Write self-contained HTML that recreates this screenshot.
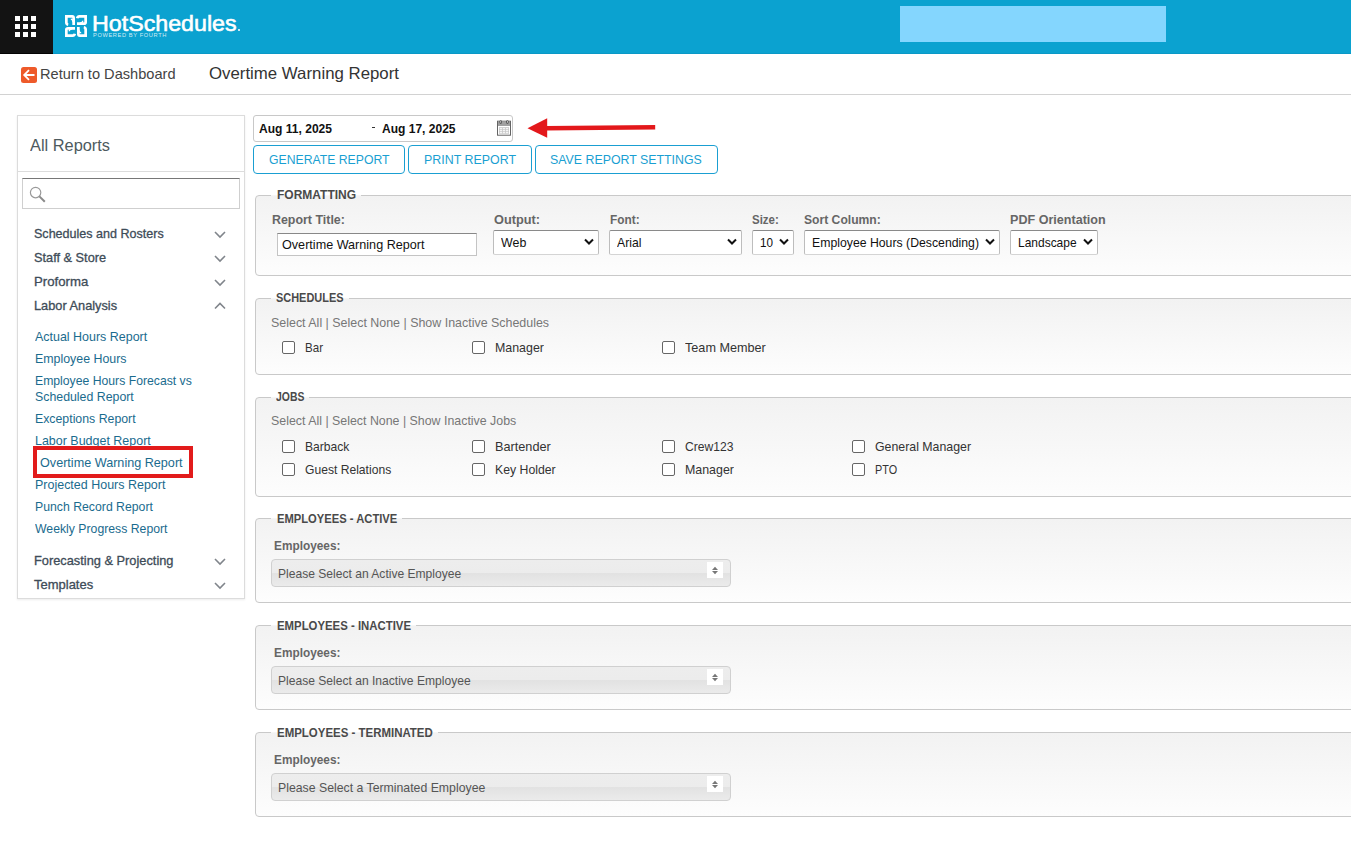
<!DOCTYPE html>
<html><head><meta charset="utf-8"><title>Overtime Warning Report</title>
<style>
html,body{margin:0;padding:0;width:1351px;height:867px;overflow:hidden;background:#fff;position:relative;font-family:"Liberation Sans",sans-serif;}
.t{position:absolute;white-space:nowrap;transform-origin:0 50%;}
.r{position:absolute;box-sizing:content-box;}
svg.r{display:block}
</style></head><body>
<div class="r" style="left:0px;top:0px;width:53px;height:54px;background:#131313"></div>
<div class="r" style="left:14.9px;top:15.9px;width:5.3px;height:5.4px;background:#fff"></div>
<div class="r" style="left:22.95px;top:15.9px;width:5.3px;height:5.4px;background:#fff"></div>
<div class="r" style="left:31.0px;top:15.9px;width:5.3px;height:5.4px;background:#fff"></div>
<div class="r" style="left:14.9px;top:23.85px;width:5.3px;height:5.4px;background:#fff"></div>
<div class="r" style="left:22.95px;top:23.85px;width:5.3px;height:5.4px;background:#fff"></div>
<div class="r" style="left:31.0px;top:23.85px;width:5.3px;height:5.4px;background:#fff"></div>
<div class="r" style="left:14.9px;top:31.8px;width:5.3px;height:5.4px;background:#fff"></div>
<div class="r" style="left:22.95px;top:31.8px;width:5.3px;height:5.4px;background:#fff"></div>
<div class="r" style="left:31.0px;top:31.8px;width:5.3px;height:5.4px;background:#fff"></div>
<div class="r" style="left:0px;top:53px;width:53px;height:1px;background:#030303"></div>
<div class="r" style="left:53px;top:0px;width:1298px;height:54px;background:#0ba2d0"></div>
<div class="r" style="left:53px;top:53px;width:1298px;height:1px;background:#0a98c6"></div>
<div class="r" style="left:900px;top:6px;width:266px;height:36px;background:#84d6fe"></div>
<svg class="r" style="left:65px;top:15px" width="22" height="22" viewBox="0 0 22 22" fill="none" stroke="#fff"><g><path d="M3.2 9.8 Q1.35 9.4 1.35 7.6 V1.35 H7.2 Q8.65 1.35 8.65 3 V10" stroke-width="2.7"/><path d="M5.8 4.2 Q8 4.3 8.1 7.2" stroke-width="1.3"/></g><g transform="rotate(90 11 11)"><path d="M3.2 9.8 Q1.35 9.4 1.35 7.6 V1.35 H7.2 Q8.65 1.35 8.65 3 V10" stroke-width="2.7"/><path d="M5.8 4.2 Q8 4.3 8.1 7.2" stroke-width="1.3"/></g><g transform="rotate(180 11 11)"><path d="M3.2 9.8 Q1.35 9.4 1.35 7.6 V1.35 H7.2 Q8.65 1.35 8.65 3 V10" stroke-width="2.7"/><path d="M5.8 4.2 Q8 4.3 8.1 7.2" stroke-width="1.3"/></g><g transform="rotate(270 11 11)"><path d="M3.2 9.8 Q1.35 9.4 1.35 7.6 V1.35 H7.2 Q8.65 1.35 8.65 3 V10" stroke-width="2.7"/><path d="M5.8 4.2 Q8 4.3 8.1 7.2" stroke-width="1.3"/></g></svg>
<div class="t" style="left:92.2px;top:12.65px;font-size:21.8px;line-height:21.8px;color:#fff;font-weight:400;letter-spacing:0px;-webkit-text-stroke:0.55px #fff;transform:scaleX(1.0654);">HotSchedules</div>
<div class="t" style="left:92.5px;top:33.46px;font-size:5.6px;line-height:5.6px;color:rgba(255,255,255,0.8);font-weight:400;letter-spacing:0.6px;transform:scaleX(1.0167);">POWERED BY FOURTH</div>
<div class="r" style="left:237.5px;top:28.5px;width:2.5px;height:2.5px;background:#fff;border-radius:50%"></div>
<svg class="r" style="left:21px;top:67px" width="16" height="16" viewBox="0 0 16 16"><rect width="16" height="16" rx="2.5" fill="#ee5a2a"/><path d="M13.5 8 H3.5 M8 3.2 L3.2 8 L8 12.8" stroke="#fff" stroke-width="1.8" fill="none"/></svg>
<div class="t" style="left:40px;top:67.03px;font-size:14.5px;line-height:14.5px;color:#444;font-weight:400;letter-spacing:0px;transform:scaleX(1.0066);">Return to Dashboard</div>
<div class="t" style="left:209px;top:65.43px;font-size:16.5px;line-height:16.5px;color:#333;font-weight:400;letter-spacing:0px;transform:scaleX(1.0190);">Overtime Warning Report</div>
<div class="r" style="left:0px;top:94px;width:1351px;height:1px;background:#d2d2d2"></div>
<div class="r" style="left:17px;top:115px;width:226px;height:482px;border:1px solid #dcdcdc;background:#fff;box-shadow:0 1px 2px rgba(0,0,0,0.08)"></div>
<div class="t" style="left:30.3px;top:137.29px;font-size:16.2px;line-height:16.2px;color:#4d5a5e;font-weight:400;letter-spacing:0px;transform:scaleX(1.0105);">All Reports</div>
<div class="r" style="left:18px;top:171px;width:226px;height:1px;background:#dcdcdc"></div>
<div class="r" style="left:22px;top:178px;width:216px;height:29px;border:1px solid #cfcfcf;border-top-color:#777;background:#fff"></div>
<svg class="r" style="left:29px;top:186px" width="18" height="18" viewBox="0 0 18 18" fill="none" stroke="#9a9a9a" stroke-width="1.2"><circle cx="6.6" cy="6.6" r="5.2"/><path d="M10.4 10.4 L15.8 15.8" stroke-width="2" stroke="#8a8a8a"/></svg>
<div class="t" style="left:34.3px;top:228.13px;font-size:12.6px;line-height:12.6px;color:#3e4c58;font-weight:400;letter-spacing:0px;-webkit-text-stroke:0.3px #3e4c58;transform:scaleX(0.9960);">Schedules and Rosters</div>
<svg class="r" style="left:213px;top:229px" width="14" height="10" viewBox="0 0 14 10" fill="none" stroke="#80858b" stroke-width="1.6"><path d="M2 3 L7 8 L12 3"/></svg>
<div class="t" style="left:34.3px;top:252.13px;font-size:12.6px;line-height:12.6px;color:#3e4c58;font-weight:400;letter-spacing:0px;-webkit-text-stroke:0.3px #3e4c58;transform:scaleX(1.0130);">Staff &amp; Store</div>
<svg class="r" style="left:213px;top:253px" width="14" height="10" viewBox="0 0 14 10" fill="none" stroke="#80858b" stroke-width="1.6"><path d="M2 3 L7 8 L12 3"/></svg>
<div class="t" style="left:34.3px;top:276.13px;font-size:12.6px;line-height:12.6px;color:#3e4c58;font-weight:400;letter-spacing:0px;-webkit-text-stroke:0.3px #3e4c58;transform:scaleX(1.0483);">Proforma</div>
<svg class="r" style="left:213px;top:277px" width="14" height="10" viewBox="0 0 14 10" fill="none" stroke="#80858b" stroke-width="1.6"><path d="M2 3 L7 8 L12 3"/></svg>
<div class="t" style="left:34.3px;top:300.13px;font-size:12.6px;line-height:12.6px;color:#3e4c58;font-weight:400;letter-spacing:0px;-webkit-text-stroke:0.3px #3e4c58;transform:scaleX(1.0144);">Labor Analysis</div>
<svg class="r" style="left:213px;top:301px" width="14" height="10" viewBox="0 0 14 10" fill="none" stroke="#80858b" stroke-width="1.6"><path d="M2 7.5 L7 2.5 L12 7.5"/></svg>
<div class="t" style="left:34.3px;top:555.13px;font-size:12.6px;line-height:12.6px;color:#3e4c58;font-weight:400;letter-spacing:0px;-webkit-text-stroke:0.3px #3e4c58;transform:scaleX(1.0167);">Forecasting &amp; Projecting</div>
<svg class="r" style="left:213px;top:556px" width="14" height="10" viewBox="0 0 14 10" fill="none" stroke="#80858b" stroke-width="1.6"><path d="M2 3 L7 8 L12 3"/></svg>
<div class="t" style="left:34.3px;top:579.13px;font-size:12.6px;line-height:12.6px;color:#3e4c58;font-weight:400;letter-spacing:0px;-webkit-text-stroke:0.3px #3e4c58;transform:scaleX(1.0312);">Templates</div>
<svg class="r" style="left:213px;top:580px" width="14" height="10" viewBox="0 0 14 10" fill="none" stroke="#80858b" stroke-width="1.6"><path d="M2 3 L7 8 L12 3"/></svg>
<div class="t" style="left:35.4px;top:330.50px;font-size:12.4px;line-height:12.4px;color:#1a6b8e;font-weight:400;letter-spacing:0px;transform:scaleX(1.0056);">Actual Hours Report</div>
<div class="t" style="left:35.4px;top:352.50px;font-size:12.4px;line-height:12.4px;color:#1a6b8e;font-weight:400;letter-spacing:0px;transform:scaleX(0.9990);">Employee Hours</div>
<div class="t" style="left:35.4px;top:374.50px;font-size:12.4px;line-height:12.4px;color:#1a6b8e;font-weight:400;letter-spacing:0px;transform:scaleX(0.9857);">Employee Hours Forecast vs</div>
<div class="t" style="left:35.4px;top:390.50px;font-size:12.4px;line-height:12.4px;color:#1a6b8e;font-weight:400;letter-spacing:0px;transform:scaleX(0.9959);">Scheduled Report</div>
<div class="t" style="left:35.4px;top:412.50px;font-size:12.4px;line-height:12.4px;color:#1a6b8e;font-weight:400;letter-spacing:0px;transform:scaleX(0.9936);">Exceptions Report</div>
<div class="t" style="left:35.4px;top:434.50px;font-size:12.4px;line-height:12.4px;color:#1a6b8e;font-weight:400;letter-spacing:0px;transform:scaleX(1.0065);">Labor Budget Report</div>
<div class="t" style="left:40.3px;top:456.50px;font-size:12.4px;line-height:12.4px;color:#1a6b8e;font-weight:400;letter-spacing:0px;transform:scaleX(1.0185);">Overtime Warning Report</div>
<div class="t" style="left:35.4px;top:478.50px;font-size:12.4px;line-height:12.4px;color:#1a6b8e;font-weight:400;letter-spacing:0px;transform:scaleX(1.0071);">Projected Hours Report</div>
<div class="t" style="left:35.4px;top:500.50px;font-size:12.4px;line-height:12.4px;color:#1a6b8e;font-weight:400;letter-spacing:0px;transform:scaleX(0.9895);">Punch Record Report</div>
<div class="t" style="left:35.4px;top:522.50px;font-size:12.4px;line-height:12.4px;color:#1a6b8e;font-weight:400;letter-spacing:0px;transform:scaleX(0.9883);">Weekly Progress Report</div>
<div class="r" style="left:33px;top:446px;width:152px;height:24px;border:4px solid #e21b1b"></div>
<div class="r" style="left:253px;top:115px;width:258px;height:25px;border:1px solid #c8c8c8;border-radius:3px;background:#fff"></div>
<div class="t" style="left:259.4px;top:122.64px;font-size:12px;line-height:12px;color:#111;font-weight:700;letter-spacing:0px;transform:scaleX(1.0039);">Aug 11, 2025</div>
<div class="r" style="left:372px;top:127px;width:3px;height:1px;background:#333"></div>
<div class="t" style="left:382.1px;top:122.64px;font-size:12px;line-height:12px;color:#111;font-weight:700;letter-spacing:0px;transform:scaleX(1.0017);">Aug 17, 2025</div>
<svg class="r" style="left:497px;top:120px" width="14" height="16" viewBox="0 0 14 16"><rect x="0.5" y="1.2" width="13" height="14" fill="#fff" stroke="#646464" stroke-width="1"/><rect x="1" y="1.7" width="12" height="4.3" fill="#a0a0a0"/><rect x="2" y="7.2" width="10" height="6.6" fill="#c4c4c4"/><g fill="#f4f4f4"><rect x="2.7" y="7.9" width="2.4" height="1.4"/><rect x="5.8" y="7.9" width="2.4" height="1.4"/><rect x="8.9" y="7.9" width="2.4" height="1.4"/><rect x="2.7" y="9.9" width="2.4" height="1.4"/><rect x="5.8" y="9.9" width="2.4" height="1.4"/><rect x="8.9" y="9.9" width="2.4" height="1.4"/><rect x="2.7" y="11.9" width="2.4" height="1.4"/><rect x="5.8" y="11.9" width="2.4" height="1.4"/><rect x="8.9" y="11.9" width="2.4" height="1.4"/></g><rect x="2.6" y="0.2" width="2.2" height="3.6" rx="1" fill="#444"/><rect x="9.3" y="0.2" width="2.2" height="3.6" rx="1" fill="#444"/><rect x="3.3" y="0.8" width="0.8" height="2" fill="#ddd"/><rect x="10" y="0.8" width="0.8" height="2" fill="#ddd"/></svg>
<svg class="r" style="left:520px;top:112px" width="145" height="30" viewBox="0 0 145 30"><path d="M26 16.3 L135.2 15.2" stroke="#e3181b" stroke-width="4.6" fill="none"/><path d="M7.5 16.3 L27.2 6.3 L27.2 25.8 Z" fill="#e3181b"/></svg>
<div class="r" style="left:253px;top:145px;width:150px;height:27px;border:1px solid #1a9fd2;border-radius:4px;background:#fff"></div>
<div class="t" style="left:268.9px;top:153.57px;font-size:12.2px;line-height:12.2px;color:#1a9fd2;font-weight:400;letter-spacing:0px;transform:scaleX(1.0034);">GENERATE REPORT</div>
<div class="r" style="left:408px;top:145px;width:122px;height:27px;border:1px solid #1a9fd2;border-radius:4px;background:#fff"></div>
<div class="t" style="left:423.9px;top:153.57px;font-size:12.2px;line-height:12.2px;color:#1a9fd2;font-weight:400;letter-spacing:0px;transform:scaleX(1.0189);">PRINT REPORT</div>
<div class="r" style="left:535px;top:145px;width:181px;height:27px;border:1px solid #1a9fd2;border-radius:4px;background:#fff"></div>
<div class="t" style="left:550.4px;top:153.57px;font-size:12.2px;line-height:12.2px;color:#1a9fd2;font-weight:400;letter-spacing:0px;transform:scaleX(1.0142);">SAVE REPORT SETTINGS</div>
<div class="r" style="left:255px;top:195px;width:1200px;height:79px;border:1px solid #c9c9c9;border-radius:4px;background:linear-gradient(#f2f2f2,#fdfdfd)"></div>
<div class="r" style="left:271px;top:195px;width:90px;height:1px;background:#f6f6f6"></div>
<div class="t" style="left:276.5px;top:188.54px;font-size:12px;line-height:12px;color:#4a4a4a;font-weight:700;letter-spacing:0px;transform:scaleX(0.9999);">FORMATTING</div>
<div class="t" style="left:271.7px;top:214.10px;font-size:12.4px;line-height:12.4px;color:#666;font-weight:700;letter-spacing:0px;transform:scaleX(1.0021);">Report Title:</div>
<div class="r" style="left:277px;top:233px;width:198px;height:21px;border:1px solid #c4c4c4;border-top-color:#888;background:#fff"></div>
<div class="t" style="left:281.5px;top:238.53px;font-size:12.6px;line-height:12.6px;color:#111;font-weight:400;letter-spacing:0px;transform:scaleX(1.0013);">Overtime Warning Report</div>
<div class="t" style="left:493.6px;top:214.10px;font-size:12.4px;line-height:12.4px;color:#666;font-weight:700;letter-spacing:0px;transform:scaleX(1.0305);">Output:</div>
<div class="r" style="left:493px;top:230px;width:104px;height:23px;border:1px solid #bdbdbd;border-top-color:#8a8a8a;border-bottom-color:#d4d4d4;border-radius:2px;background:#fff"></div>
<div class="t" style="left:500.9px;top:236.53px;font-size:12.6px;line-height:12.6px;color:#111;font-weight:400;letter-spacing:0px;transform:scaleX(0.9855);">Web</div>
<svg class="r" style="left:584px;top:238px" width="10" height="8" viewBox="0 0 10 8" fill="none" stroke="#111" stroke-width="2"><path d="M1 1.5 L5 5.5 L9 1.5"/></svg>
<div class="t" style="left:609.6px;top:214.10px;font-size:12.4px;line-height:12.4px;color:#666;font-weight:700;letter-spacing:0px;transform:scaleX(0.9558);">Font:</div>
<div class="r" style="left:609px;top:230px;width:131px;height:23px;border:1px solid #bdbdbd;border-top-color:#8a8a8a;border-bottom-color:#d4d4d4;border-radius:2px;background:#fff"></div>
<div class="t" style="left:617.2px;top:236.53px;font-size:12.6px;line-height:12.6px;color:#111;font-weight:400;letter-spacing:0px;transform:scaleX(0.9681);">Arial</div>
<svg class="r" style="left:727px;top:238px" width="10" height="8" viewBox="0 0 10 8" fill="none" stroke="#111" stroke-width="2"><path d="M1 1.5 L5 5.5 L9 1.5"/></svg>
<div class="t" style="left:751.9px;top:214.10px;font-size:12.4px;line-height:12.4px;color:#666;font-weight:700;letter-spacing:0px;transform:scaleX(0.9266);">Size:</div>
<div class="r" style="left:752px;top:230px;width:40px;height:23px;border:1px solid #bdbdbd;border-top-color:#8a8a8a;border-bottom-color:#d4d4d4;border-radius:2px;background:#fff"></div>
<div class="t" style="left:760.2px;top:236.53px;font-size:12.6px;line-height:12.6px;color:#111;font-weight:400;letter-spacing:0px;transform:scaleX(0.9275);">10</div>
<svg class="r" style="left:779px;top:238px" width="10" height="8" viewBox="0 0 10 8" fill="none" stroke="#111" stroke-width="2"><path d="M1 1.5 L5 5.5 L9 1.5"/></svg>
<div class="t" style="left:804.4px;top:214.10px;font-size:12.4px;line-height:12.4px;color:#666;font-weight:700;letter-spacing:0px;transform:scaleX(0.9787);">Sort Column:</div>
<div class="r" style="left:804px;top:230px;width:194px;height:23px;border:1px solid #bdbdbd;border-top-color:#8a8a8a;border-bottom-color:#d4d4d4;border-radius:2px;background:#fff"></div>
<div class="t" style="left:812.3px;top:236.53px;font-size:12.6px;line-height:12.6px;color:#111;font-weight:400;letter-spacing:0px;transform:scaleX(0.9738);">Employee Hours (Descending)</div>
<svg class="r" style="left:985px;top:238px" width="10" height="8" viewBox="0 0 10 8" fill="none" stroke="#111" stroke-width="2"><path d="M1 1.5 L5 5.5 L9 1.5"/></svg>
<div class="t" style="left:1010.3px;top:214.10px;font-size:12.4px;line-height:12.4px;color:#666;font-weight:700;letter-spacing:0px;transform:scaleX(1.0147);">PDF Orientation</div>
<div class="r" style="left:1010px;top:230px;width:86px;height:23px;border:1px solid #bdbdbd;border-top-color:#8a8a8a;border-bottom-color:#d4d4d4;border-radius:2px;background:#fff"></div>
<div class="t" style="left:1018.4px;top:236.53px;font-size:12.6px;line-height:12.6px;color:#111;font-weight:400;letter-spacing:0px;transform:scaleX(0.9509);">Landscape</div>
<svg class="r" style="left:1083px;top:238px" width="10" height="8" viewBox="0 0 10 8" fill="none" stroke="#111" stroke-width="2"><path d="M1 1.5 L5 5.5 L9 1.5"/></svg>
<div class="r" style="left:255px;top:298px;width:1200px;height:75px;border:1px solid #c9c9c9;border-radius:4px;background:linear-gradient(#f2f2f2,#fdfdfd)"></div>
<div class="r" style="left:271px;top:298px;width:78px;height:1px;background:#f6f6f6"></div>
<div class="t" style="left:276.2px;top:291.84px;font-size:12px;line-height:12px;color:#4a4a4a;font-weight:700;letter-spacing:0px;transform:scaleX(0.9120);">SCHEDULES</div>
<div class="t" style="left:271.4px;top:316.70px;font-size:12.4px;line-height:12.4px;color:#777;font-weight:400;letter-spacing:0px;transform:scaleX(1.0035);">Select All | Select None | Show Inactive Schedules</div>
<div class="r" style="left:282px;top:341px;width:11px;height:11px;border:1px solid #666;border-radius:2px;background:#fff"></div>
<div class="t" style="left:305px;top:341.50px;font-size:12.4px;line-height:12.4px;color:#333;font-weight:400;letter-spacing:0px;transform:scaleX(0.9328);">Bar</div>
<div class="r" style="left:472px;top:341px;width:11px;height:11px;border:1px solid #666;border-radius:2px;background:#fff"></div>
<div class="t" style="left:495px;top:341.50px;font-size:12.4px;line-height:12.4px;color:#333;font-weight:400;letter-spacing:0px;transform:scaleX(0.9999);">Manager</div>
<div class="r" style="left:662px;top:341px;width:11px;height:11px;border:1px solid #666;border-radius:2px;background:#fff"></div>
<div class="t" style="left:685px;top:341.50px;font-size:12.4px;line-height:12.4px;color:#333;font-weight:400;letter-spacing:0px;transform:scaleX(1.0204);">Team Member</div>
<div class="r" style="left:255px;top:397px;width:1200px;height:98px;border:1px solid #c9c9c9;border-radius:4px;background:linear-gradient(#f2f2f2,#fdfdfd)"></div>
<div class="r" style="left:271px;top:397px;width:38px;height:1px;background:#f6f6f6"></div>
<div class="t" style="left:275.6px;top:390.64px;font-size:12px;line-height:12px;color:#4a4a4a;font-weight:700;letter-spacing:0px;transform:scaleX(0.8688);">JOBS</div>
<div class="t" style="left:271.4px;top:415.20px;font-size:12.4px;line-height:12.4px;color:#777;font-weight:400;letter-spacing:0px;transform:scaleX(0.9994);">Select All | Select None | Show Inactive Jobs</div>
<div class="r" style="left:282px;top:440px;width:11px;height:11px;border:1px solid #666;border-radius:2px;background:#fff"></div>
<div class="t" style="left:305px;top:440.50px;font-size:12.4px;line-height:12.4px;color:#333;font-weight:400;letter-spacing:0px;transform:scaleX(0.9765);">Barback</div>
<div class="r" style="left:282px;top:463px;width:11px;height:11px;border:1px solid #666;border-radius:2px;background:#fff"></div>
<div class="t" style="left:305px;top:463.70px;font-size:12.4px;line-height:12.4px;color:#333;font-weight:400;letter-spacing:0px;transform:scaleX(0.9778);">Guest Relations</div>
<div class="r" style="left:472px;top:440px;width:11px;height:11px;border:1px solid #666;border-radius:2px;background:#fff"></div>
<div class="t" style="left:495px;top:440.50px;font-size:12.4px;line-height:12.4px;color:#333;font-weight:400;letter-spacing:0px;transform:scaleX(1.0253);">Bartender</div>
<div class="r" style="left:472px;top:463px;width:11px;height:11px;border:1px solid #666;border-radius:2px;background:#fff"></div>
<div class="t" style="left:495px;top:463.70px;font-size:12.4px;line-height:12.4px;color:#333;font-weight:400;letter-spacing:0px;transform:scaleX(0.9903);">Key Holder</div>
<div class="r" style="left:662px;top:440px;width:11px;height:11px;border:1px solid #666;border-radius:2px;background:#fff"></div>
<div class="t" style="left:685px;top:440.50px;font-size:12.4px;line-height:12.4px;color:#333;font-weight:400;letter-spacing:0px;transform:scaleX(0.9779);">Crew123</div>
<div class="r" style="left:662px;top:463px;width:11px;height:11px;border:1px solid #666;border-radius:2px;background:#fff"></div>
<div class="t" style="left:685px;top:463.70px;font-size:12.4px;line-height:12.4px;color:#333;font-weight:400;letter-spacing:0px;transform:scaleX(0.9999);">Manager</div>
<div class="r" style="left:852px;top:440px;width:11px;height:11px;border:1px solid #666;border-radius:2px;background:#fff"></div>
<div class="t" style="left:875px;top:440.50px;font-size:12.4px;line-height:12.4px;color:#333;font-weight:400;letter-spacing:0px;transform:scaleX(0.9955);">General Manager</div>
<div class="r" style="left:852px;top:463px;width:11px;height:11px;border:1px solid #666;border-radius:2px;background:#fff"></div>
<div class="t" style="left:875px;top:463.70px;font-size:12.4px;line-height:12.4px;color:#333;font-weight:400;letter-spacing:0px;transform:scaleX(0.8752);">PTO</div>
<div class="r" style="left:255px;top:518px;width:1200px;height:83px;border:1px solid #c9c9c9;border-radius:4px;background:linear-gradient(#f2f2f2,#fdfdfd)"></div>
<div class="r" style="left:271px;top:518px;width:131px;height:1px;background:#f6f6f6"></div>
<div class="t" style="left:276.9px;top:513.24px;font-size:12px;line-height:12px;color:#4a4a4a;font-weight:700;letter-spacing:0px;transform:scaleX(0.9332);">EMPLOYEES - ACTIVE</div>
<div class="t" style="left:273.9px;top:539.64px;font-size:12px;line-height:12px;color:#666;font-weight:700;letter-spacing:0px;transform:scaleX(0.9858);">Employees:</div>
<div class="r" style="left:271px;top:559px;width:458px;height:26px;border:1px solid #d0d0d0;border-radius:4px;background:linear-gradient(#ededed 0%,#ececec 50%,#e2e2e2 52%,#ebebeb 100%)"></div>
<div class="t" style="left:277.7px;top:567.90px;font-size:12.4px;line-height:12.4px;color:#555;font-weight:400;letter-spacing:0px;transform:scaleX(0.9743);">Please Select an Active Employee</div>
<div class="r" style="left:707px;top:562px;width:16px;height:16px;background:#fff"></div>
<svg class="r" style="left:707px;top:562px" width="16" height="16" viewBox="0 0 16 16" fill="#777"><path d="M5 8 L8 4.8 L11 8 Z"/><path d="M5 9 L8 12.2 L11 9 Z"/></svg>
<div class="r" style="left:255px;top:625px;width:1200px;height:83px;border:1px solid #c9c9c9;border-radius:4px;background:linear-gradient(#f2f2f2,#fdfdfd)"></div>
<div class="r" style="left:271px;top:625px;width:145px;height:1px;background:#f6f6f6"></div>
<div class="t" style="left:276.9px;top:620.24px;font-size:12px;line-height:12px;color:#4a4a4a;font-weight:700;letter-spacing:0px;transform:scaleX(0.9479);">EMPLOYEES - INACTIVE</div>
<div class="t" style="left:273.9px;top:646.64px;font-size:12px;line-height:12px;color:#666;font-weight:700;letter-spacing:0px;transform:scaleX(0.9858);">Employees:</div>
<div class="r" style="left:271px;top:666px;width:458px;height:26px;border:1px solid #d0d0d0;border-radius:4px;background:linear-gradient(#ededed 0%,#ececec 50%,#e2e2e2 52%,#ebebeb 100%)"></div>
<div class="t" style="left:277.7px;top:674.90px;font-size:12.4px;line-height:12.4px;color:#555;font-weight:400;letter-spacing:0px;transform:scaleX(0.9743);">Please Select an Inactive Employee</div>
<div class="r" style="left:707px;top:669px;width:16px;height:16px;background:#fff"></div>
<svg class="r" style="left:707px;top:669px" width="16" height="16" viewBox="0 0 16 16" fill="#777"><path d="M5 8 L8 4.8 L11 8 Z"/><path d="M5 9 L8 12.2 L11 9 Z"/></svg>
<div class="r" style="left:255px;top:732px;width:1200px;height:83px;border:1px solid #c9c9c9;border-radius:4px;background:linear-gradient(#f2f2f2,#fdfdfd)"></div>
<div class="r" style="left:271px;top:732px;width:167px;height:1px;background:#f6f6f6"></div>
<div class="t" style="left:276.9px;top:727.24px;font-size:12px;line-height:12px;color:#4a4a4a;font-weight:700;letter-spacing:0px;transform:scaleX(0.9551);">EMPLOYEES - TERMINATED</div>
<div class="t" style="left:273.9px;top:753.64px;font-size:12px;line-height:12px;color:#666;font-weight:700;letter-spacing:0px;transform:scaleX(0.9858);">Employees:</div>
<div class="r" style="left:271px;top:773px;width:458px;height:26px;border:1px solid #d0d0d0;border-radius:4px;background:linear-gradient(#ededed 0%,#ececec 50%,#e2e2e2 52%,#ebebeb 100%)"></div>
<div class="t" style="left:277.7px;top:781.90px;font-size:12.4px;line-height:12.4px;color:#555;font-weight:400;letter-spacing:0px;transform:scaleX(0.9911);">Please Select a Terminated Employee</div>
<div class="r" style="left:707px;top:776px;width:16px;height:16px;background:#fff"></div>
<svg class="r" style="left:707px;top:776px" width="16" height="16" viewBox="0 0 16 16" fill="#777"><path d="M5 8 L8 4.8 L11 8 Z"/><path d="M5 9 L8 12.2 L11 9 Z"/></svg>
</body></html>
